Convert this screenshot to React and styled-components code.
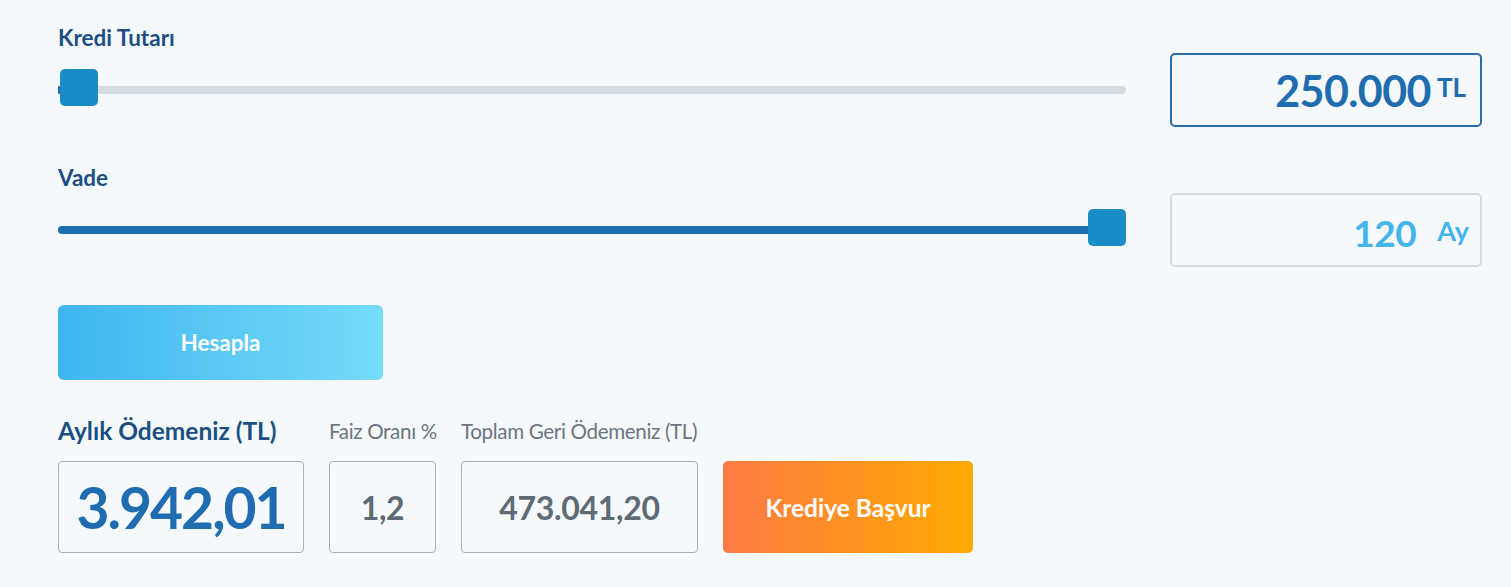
import React from "react";
import styled, { createGlobalStyle } from "styled-components";

const GlobalStyle = createGlobalStyle`
  html, body {
    margin: 0;
    padding: 0;
    background: #f5f9fc;
    font-family: "Lato", "Open Sans", sans-serif;
  }
`;

const Calculator = () => {
  return (
    <Page>
      <GlobalStyle />
      <SliderField>
        <FieldLabel>Kredi Tutarı</FieldLabel>
        <SliderRow>
          <Slider percent={0} filled={false} />
          <AmountBox $active>
            <Amount>250.000</Amount>
            <Unit>TL</Unit>
          </AmountBox>
        </SliderRow>
      </SliderField>

      <SliderField>
        <FieldLabel>Vade</FieldLabel>
        <SliderRow>
          <Slider percent={100} filled />
          <AmountBox>
            <Amount $light>120</Amount>
            <Unit $light>Ay</Unit>
          </AmountBox>
        </SliderRow>
      </SliderField>

      <CalcButton>Hesapla</CalcButton>

      <Results>
        <ResultCol $width={246}>
          <ResultLabel $main>Aylık Ödemeniz (TL)</ResultLabel>
          <ResultBox>
            <ResultValue $main>3.942,01</ResultValue>
          </ResultBox>
        </ResultCol>
        <ResultCol $width={107}>
          <ResultLabel>Faiz Oranı %</ResultLabel>
          <ResultBox>
            <ResultValue>1,2</ResultValue>
          </ResultBox>
        </ResultCol>
        <ResultCol $width={237}>
          <ResultLabel>Toplam Geri Ödemeniz (TL)</ResultLabel>
          <ResultBox>
            <ResultValue>473.041,20</ResultValue>
          </ResultBox>
        </ResultCol>
        <ApplyButton>Krediye Başvur</ApplyButton>
      </Results>
    </Page>
  );
};

const Slider = ({ percent, filled }) => {
  return (
    <Track>
      <Fill style={{ width: filled ? `${percent}%` : "2px" }} />
      <Thumb style={{ left: `calc((100% - 38px) * ${percent / 100} + ${percent ? 0 : 2}px)` }} />
    </Track>
  );
};

const Page = styled.div`
  display: flex;
  flex-direction: column;
  gap: 38px;
  padding: 25px 29px 0 58px;
  box-sizing: border-box;
  width: 1511px;
`;

const SliderField = styled.div`
  display: flex;
  flex-direction: column;
  gap: 2px;
`;

const FieldLabel = styled.div`
  font-size: 22.5px;
  line-height: 26px;
  font-weight: 700;
  color: #1b4f82;
`;

const SliderRow = styled.div`
  display: grid;
  grid-template-columns: 1fr 312px;
  column-gap: 44px;
  align-items: center;
`;

const Track = styled.div`
  position: relative;
  height: 8px;
  border-radius: 4px;
  background: #d4dce1;
`;

const Fill = styled.div`
  height: 100%;
  border-radius: 4px;
  background: #1b6fb0;
`;

const Thumb = styled.div`
  position: absolute;
  top: -17px;
  width: 38px;
  height: 37px;
  border-radius: 5px;
  background: #1a8dc7;
`;

const AmountBox = styled.div`
  height: 74px;
  box-sizing: border-box;
  border: 2px solid ${(p) => (p.$active ? "#2a6dac" : "#d6dbdf")};
  border-radius: 5px;
  display: flex;
  align-items: center;
  justify-content: flex-end;
  gap: ${(p) => (p.$active ? "6px" : "0")};
  padding-right: ${(p) => (p.$active ? "14px" : "11px")};
`;

const Amount = styled.span`
  font-size: ${(p) => (p.$light ? "37px" : "43px")};
  font-weight: 700;
  letter-spacing: ${(p) => (p.$light ? "-0.5px" : "-0.6px")};
  color: ${(p) => (p.$light ? "#45b4ea" : "#1f6db0")};
  margin-top: ${(p) => (p.$light ? "4px" : "0")};
`;

const Unit = styled.span`
  font-size: ${(p) => (p.$light ? "27px" : "26px")};
  font-weight: 700;
  color: ${(p) => (p.$light ? "#45b4ea" : "#1f6db0")};
  margin-left: ${(p) => (p.$light ? "21px" : "0")};
  margin-bottom: ${(p) => (p.$light ? "0" : "6px")};
`;

const CalcButton = styled.button`
  width: 325px;
  height: 75px;
  border: 0;
  border-radius: 6px;
  background: linear-gradient(90deg, #3eb5ef 0%, #75dcfa 100%);
  color: #fff;
  font-family: inherit;
  font-size: 22.5px;
  font-weight: 700;
  cursor: pointer;
`;

const Results = styled.div`
  display: flex;
  align-items: flex-end;
  gap: 25px;
`;

const ResultCol = styled.div`
  display: flex;
  flex-direction: column;
  width: ${(p) => p.$width}px;
  flex: none;
`;

const ResultLabel = styled.div`
  font-size: ${(p) => (p.$main ? "24.5px" : "20.6px")};
  line-height: 26px;
  font-weight: ${(p) => (p.$main ? 700 : 400)};
  color: ${(p) => (p.$main ? "#1b4f82" : "#6b7680")};
  letter-spacing: ${(p) => (p.$main ? "0" : "-0.35px")};
  margin-bottom: 17px;
  white-space: nowrap;
`;

const ResultBox = styled.div`
  height: 92px;
  box-sizing: border-box;
  border: 1px solid #aab1b7;
  border-radius: 4px;
  display: flex;
  align-items: center;
  justify-content: center;
`;

const ResultValue = styled.span`
  font-size: ${(p) => (p.$main ? "57px" : "32px")};
  font-weight: 700;
  letter-spacing: ${(p) => (p.$main ? "-2px" : "-0.3px")};
  color: ${(p) => (p.$main ? "#1f6db0" : "#5f6b74")};
`;

const ApplyButton = styled.button`
  width: 250px;
  height: 92px;
  flex: none;
  border: 0;
  border-radius: 5px;
  background: linear-gradient(90deg, #ff7b45 0%, #ffaa00 100%);
  color: #fff;
  font-family: inherit;
  font-size: 24.5px;
  font-weight: 700;
  cursor: pointer;
`;

export default function App() {
  return <Calculator />;
}
